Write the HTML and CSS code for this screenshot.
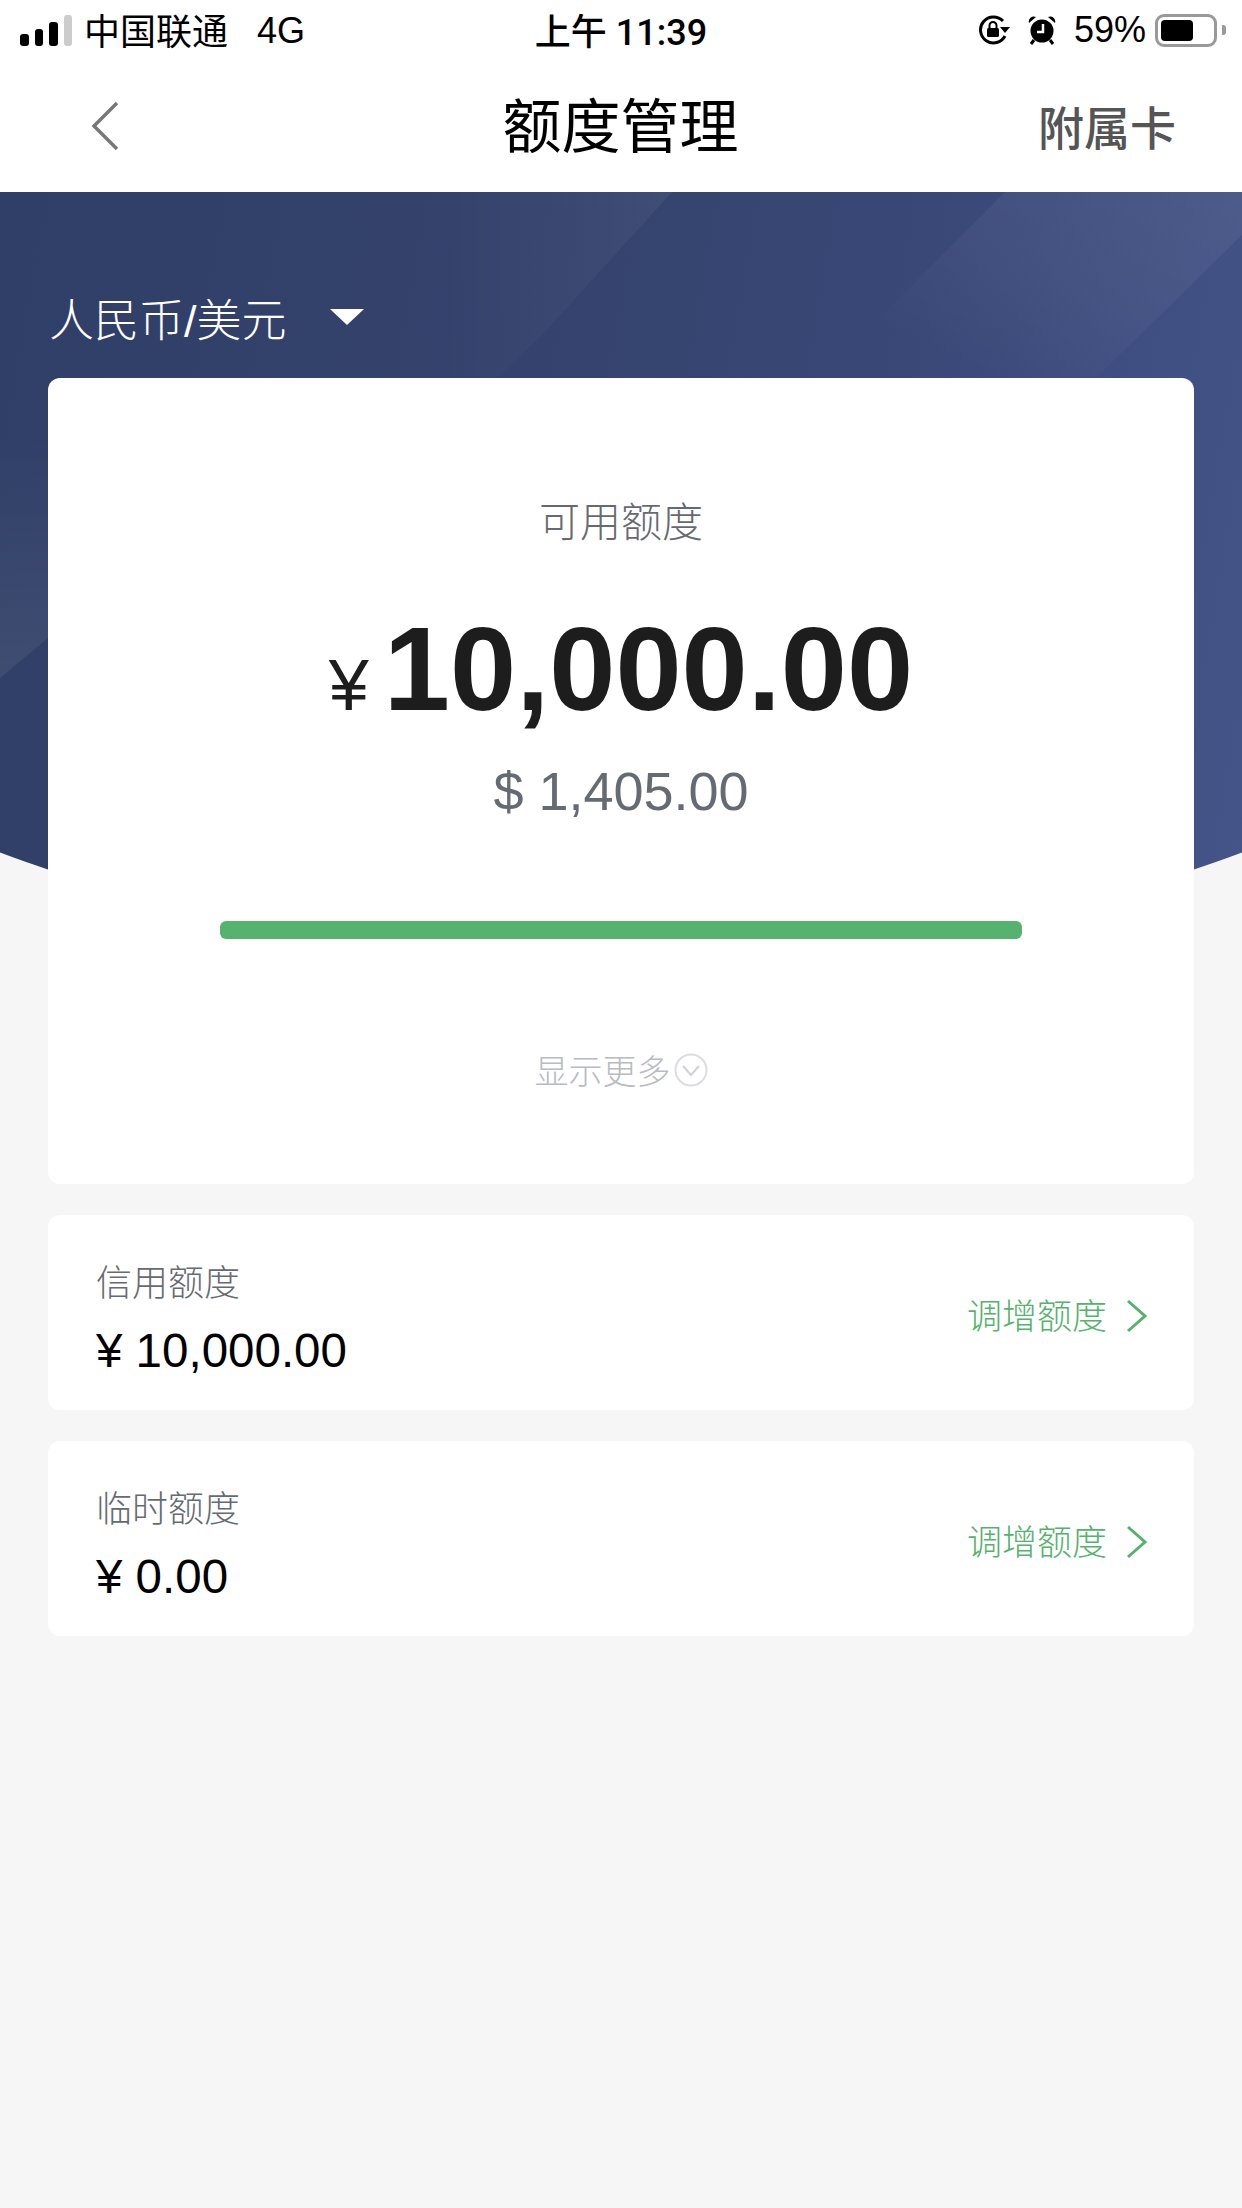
FILE: index.html
```html
<!DOCTYPE html>
<html lang="zh-CN">
<head>
    <meta charset="UTF-8">
    <meta name="viewport" content="width=device-width, initial-scale=1.0">
    <title>额度管理</title>
    <link rel="stylesheet" href="styles.css">
</head>
<body>

<div class="status-bar">
    <div class="status-left">
        <div class="signal">
            <span class="bar bar-1"></span>
            <span class="bar bar-2"></span>
            <span class="bar bar-3"></span>
            <span class="bar bar-4"></span>
        </div>
        <span class="carrier">中国联通</span>
        <span class="network">4G</span>
    </div>
    <div class="status-time">上午 11:39</div>
    <div class="status-right">
        <svg class="icon-lock" width="32" height="30" viewBox="0 0 32 30">
            <path d="M25 6A13 13 0 1 0 27 21" fill="none" stroke="#000" stroke-width="3"/>
            <path d="M22 12h10l-5 6z" fill="#000"/>
            <rect x="9" y="13" width="12" height="9" rx="1.5" fill="#000"/>
            <path d="M11.500 13V10.500a3.500 3.500 0 0 1 7 0V13" fill="none" stroke="#000" stroke-width="2"/>
        </svg>
        <svg class="icon-alarm" width="28" height="30" viewBox="0 0 28 30">
            <circle cx="14" cy="16" r="11.500" fill="#000"/>
            <path d="M1 8a5 5 0 0 1 7-6zM27 8a5 5 0 0 0-7-6z" fill="#000"/>
            <path d="M6 25l-3 4M22 25l3 4" stroke="#000" stroke-width="3"/>
            <path d="M15 9v8H9" fill="none" stroke="#fff" stroke-width="2.500"/>
        </svg>
        <span class="battery-text">59%</span>
        <div class="battery">
            <div class="battery-fill"></div>
        </div>
        <div class="battery-nub"></div>
    </div>
</div>

<header class="nav">
    <svg class="nav-back" width="28" height="50" viewBox="0 0 28 50">
        <path d="M26 2L3 25l23 23" fill="none" stroke="#777" stroke-width="3.500"/>
    </svg>
    <h1 class="nav-title">额度管理</h1>
    <a class="nav-link">附属卡</a>
</header>

<section class="hero">
    <svg class="hero-shapes" width="1242" height="773" viewBox="0 0 1242 773">
        <defs>
            <linearGradient id="band-a" x1="0" y1="0" x2="1" y2="0">
                <stop offset="0" stop-color="#fff" stop-opacity="0"/>
                <stop offset="1" stop-color="#fff" stop-opacity="0.05"/>
            </linearGradient>
            <linearGradient id="band-b" x1="0" y1="1" x2="1" y2="0">
                <stop offset="0.2" stop-color="#fff" stop-opacity="0"/>
                <stop offset="0.55" stop-color="#fff" stop-opacity="0.035"/>
                <stop offset="1" stop-color="#fff" stop-opacity="0.06"/>
            </linearGradient>
            <linearGradient id="band-c" x1="0" y1="0" x2="0" y2="1">
                <stop offset="0" stop-color="#fff" stop-opacity="0"/>
                <stop offset="1" stop-color="#fff" stop-opacity="0.07"/>
            </linearGradient>
        </defs>
        <polygon points="672,0 440,0 440,240 542,143" fill="url(#band-a)"/>
        <polygon points="1005,0 1242,0 1242,43 1096,186 820,186" fill="url(#band-b)"/>
        <polygon points="0,486 48,446 48,240 0,240" fill="url(#band-c)"/>
    </svg>
    <div class="currency">
        <span>人民币/美元</span>
        <span class="caret"></span>
    </div>
</section>

<main class="content">
    <div class="card summary">
        <div class="summary-label">可用额度</div>
        <div class="summary-amount">
            <span class="yen">¥</span><span class="amount">10,000.00</span>
        </div>
        <div class="summary-usd">$ 1,405.00</div>
        <div class="progress"></div>
        <div class="more">
            <span>显示更多</span>
            <svg width="34" height="34" viewBox="0 0 34 34">
                <circle cx="17" cy="17" r="15.500" fill="none" stroke="#dcdde1" stroke-width="2"/>
                <path d="M9 13l8 9 8-9" fill="none" stroke="#cfd1d6" stroke-width="2"/>
            </svg>
        </div>
    </div>

    <div class="card row">
        <div class="row-info">
            <div class="row-label">信用额度</div>
            <div class="row-value">¥ 10,000.00</div>
        </div>
        <div class="row-action">
            <span>调增额度</span>
            <svg class="row-arrow" width="22" height="34" viewBox="0 0 22 34">
                <path d="M2 2l17 15L2 32" fill="none" stroke="#55b26d" stroke-width="3"/>
            </svg>
        </div>
    </div>

    <div class="card row">
        <div class="row-info">
            <div class="row-label">临时额度</div>
            <div class="row-value">¥ 0.00</div>
        </div>
        <div class="row-action">
            <span>调增额度</span>
            <svg class="row-arrow" width="22" height="34" viewBox="0 0 22 34">
                <path d="M2 2l17 15L2 32" fill="none" stroke="#55b26d" stroke-width="3"/>
            </svg>
        </div>
    </div>
</main>

</body>
</html>
```

FILE: styles.css
```css
body {
    font-family: "Liberation Sans", "Noto Sans CJK SC", sans-serif;
    margin: 0;
    padding: 0;
    background-color: #f6f6f6;
    min-height: 2208px;
}

.status-bar {
    display: grid;
    grid-template-columns: 1fr auto 1fr;
    align-items: center;
    height: 60px;
    background-color: white;
    color: #000;
    font-size: 36px;
}

.status-left {
    display: flex;
    align-items: center;
    padding-left: 20px;
}

.signal {
    display: flex;
    align-items: flex-end;
    gap: 6px;
    height: 32px;
    margin-right: 12px;
}

.bar {
    width: 8.500px;
    background-color: #000;
    border-radius: 3px;
}

.bar-1 {
    height: 12px;
}

.bar-2 {
    height: 17px;
}

.bar-3 {
    height: 24px;
}

.bar-4 {
    height: 31px;
    background-color: #ccc;
}

.carrier {
    margin-top: -2px;
}

.network {
    margin: 2px 0 0 29px;
}

.status-time {
    margin-top: -2px;
    font-family: Roboto, "Noto Sans CJK SC", sans-serif;
    font-weight: 500;
}

.status-right {
    display: flex;
    align-items: center;
    justify-content: flex-end;
    padding-right: 16px;
}

.icon-lock {
    margin-right: 18px;
}

.icon-alarm {
    margin-right: 18px;
}

.battery {
    box-sizing: border-box;
    width: 62px;
    height: 33px;
    margin-left: 9px;
    padding: 3px;
    border: 3px solid #999;
    border-radius: 9px;
}

.battery-fill {
    width: 32px;
    height: 100%;
    background-color: #000;
    border-radius: 4px;
}

.battery-nub {
    width: 4px;
    height: 10px;
    margin-left: 5px;
    background-color: #999;
    border-radius: 0 3px 3px 0;
}

.nav {
    display: grid;
    grid-template-columns: 1fr auto 1fr;
    align-items: center;
    height: 132px;
    padding: 0 66px 0 91px;
    background-color: white;
}

.nav-title {
    margin: -8px 0 0;
    font-size: 59px;
    font-weight: 400;
    color: #000;
    transform: translateX(-13px);
}

.nav-link {
    justify-self: end;
    margin-top: -3px;
    font-size: 46px;
    font-weight: 500;
    color: #555;
}

.hero {
    position: relative;
    box-sizing: border-box;
    height: 773px;
    padding: 97px 0 0 49px;
    background: linear-gradient(100deg, #303f67 0%, #35436e 45%, #3a4878 68%, #455589 100%);
    clip-path: circle(1770px at 621px -997px);
}

.hero-shapes {
    position: absolute;
    top: 0;
    left: 0;
}

.currency {
    position: relative;
    display: flex;
    align-items: center;
    height: 56px;
    color: white;
    font-size: 45px;
    font-weight: 300;
}

.caret {
    width: 0;
    height: 0;
    margin-left: 43px;
    border-left: 17px solid transparent;
    border-right: 17px solid transparent;
    border-top: 16px solid white;
}

.content {
    position: relative;
    display: flex;
    flex-direction: column;
    gap: 31px;
    margin: -587px 48px 0;
}

.card {
    background-color: white;
    border-radius: 12px;
}

.summary {
    display: flex;
    flex-direction: column;
    align-items: center;
    height: 806px;
    padding-top: 115px;
    box-sizing: border-box;
}

.summary-label {
    font-size: 41px;
    font-weight: 300;
    line-height: 60px;
    color: #666a70;
}

.summary-amount {
    display: flex;
    align-items: baseline;
    margin-top: 46px;
    line-height: 140px;
    color: #1d1d1d;
}

.yen {
    font-size: 72px;
    margin-right: 15px;
}

.amount {
    font-size: 119px;
    font-weight: bold;
}

.summary-usd {
    margin-top: 5px;
    font-size: 54px;
    line-height: 62px;
    color: #666b72;
}

.progress {
    width: 802px;
    height: 18px;
    margin-top: 99px;
    background-color: #56b36e;
    border-radius: 6px;
}

.more {
    display: flex;
    align-items: center;
    gap: 3px;
    margin-top: 106px;
    font-size: 34px;
    font-weight: 300;
    color: #b9bbc1;
}

.row {
    display: flex;
    align-items: center;
    justify-content: space-between;
    height: 195px;
    padding: 0 46px 0 48px;
}

.row-info {
    padding-top: 12px;
}

.row-label {
    font-size: 36px;
    font-weight: 300;
    line-height: 50px;
    color: #666b70;
}

.row-value {
    margin-top: 15px;
    font-size: 47.500px;
    line-height: 54px;
    color: #000;
}

.row-action {
    display: flex;
    align-items: center;
    gap: 19px;
    padding-top: 2px;
    font-size: 35px;
    font-weight: 300;
    color: #55b26d;
}

.row-arrow {
    margin-top: 4px;
}
```
